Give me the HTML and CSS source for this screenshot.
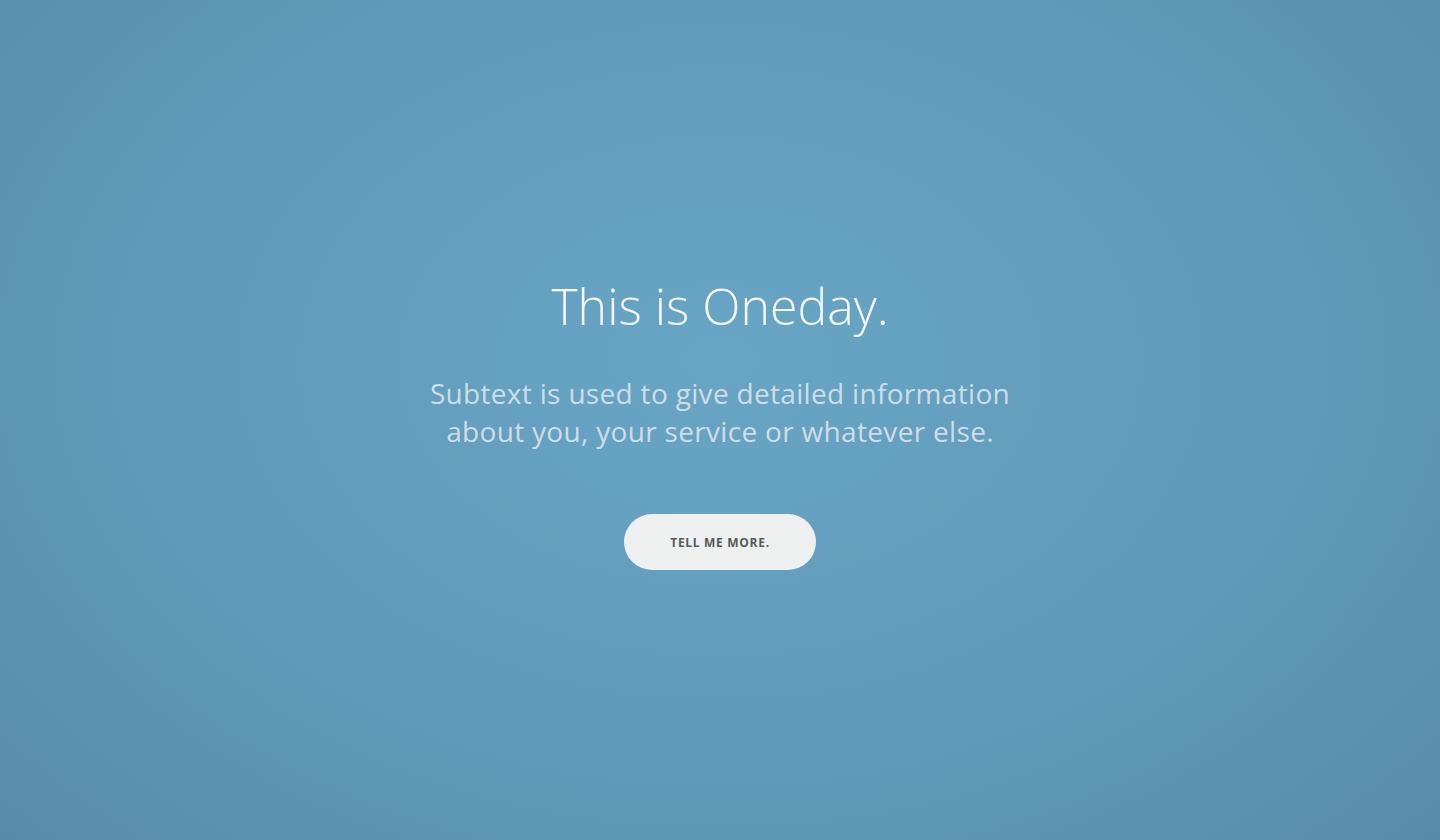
FILE: index.html
```html
<!DOCTYPE html>
<html>
<head>
<meta charset="utf-8">
<link rel="stylesheet" href="styles.css">
</head>
<body>
<section class="hero">
  <h1 class="hero-title">This is Oneday.</h1>
  <p class="hero-sub">Subtext is used to give detailed information<br>about you, your service or whatever else.</p>
  <a class="hero-btn" href="#">TELL ME MORE.</a>
</section>
</body>
</html>
```
FILE: styles.css
```css
html, body {
  margin: 0;
  padding: 0;
  height: 100%;
}
body {
  font-family: "Open Sans", "Liberation Sans", sans-serif;
  background: radial-gradient(ellipse 75% 90% at 50% 43%, #68a5c4 0%, #6099b9 55%, #5588a8 100%);
  background-color: #5b8fb0;
}
.hero {
  height: 840px;
  display: flex;
  flex-direction: column;
  align-items: center;
  justify-content: center;
  text-align: center;
  padding-top: 6px;
  box-sizing: border-box;
}
.hero-title {
  margin: 0;
  font-weight: 300;
  font-size: 50px;
  line-height: 60px;
  color: #f4f6f7;
}
.hero-sub {
  margin: 38px 0 0;
  font-weight: 400;
  font-size: 28px;
  line-height: 38px;
  letter-spacing: 0.32px;
  color: #cfdde6;
}
.hero-btn {
  margin-top: 64px;
  display: flex;
  align-items: center;
  justify-content: center;
  width: 192px;
  height: 56px;
  border-radius: 28px;
  background: #eef0ef;
  color: #555a5c;
  font-size: 12px;
  font-weight: 700;
  letter-spacing: 0.7px;
  text-decoration: none;
}
```
